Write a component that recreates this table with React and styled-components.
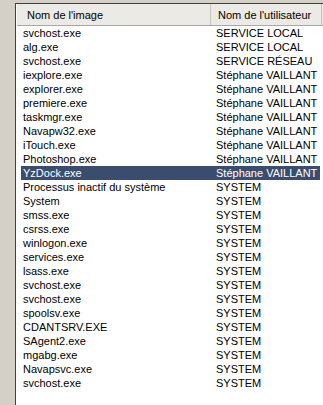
import React from 'react'
import styled, { createGlobalStyle } from 'styled-components'

const GlobalStyle = createGlobalStyle`
  html, body {
    margin: 0;
    padding: 0;
    background: #d4d0c8;
    overflow: hidden;
  }
`

const Window = styled.div`
  width: 323px;
  height: 405px;
  padding: 3px 0 0 15px;
  box-sizing: border-box;
  font-family: "Liberation Sans", Arial, sans-serif;
  font-size: 11px;
  color: #000;
`

const ListView = styled.div`
  height: 100%;
  background: #fff;
  border-top: 1px solid #404040;
  border-left: 1px solid #404040;
  box-sizing: border-box;
  padding-left: 1px;
`

const Header = styled.div`
  display: flex;
  height: 22px;
  background: #ebeae4;
  border-bottom: 1px solid #a7a6aa;
  box-sizing: border-box;
`

const HeaderCell = styled.div`
  width: ${(p) => p.width}px;
  padding-left: ${(p) => p.pad}px;
  box-sizing: border-box;
  display: flex;
  align-items: center;
  border-right: 1px solid #c6c5bd;
  white-space: nowrap;
`

// full-row selection starts at the label, a few pixels in from the border
const Row = styled.div`
  display: flex;
  height: 14px;
  line-height: 14px;
  margin-left: 4px;
  width: 299px;
  background: ${(p) => (p.selected ? '#3b4d6e' : 'transparent')};
  color: ${(p) => (p.selected ? '#fff' : '#000')};
`

const Cell = styled.div`
  width: ${(p) => p.width}px;
  padding-left: ${(p) => p.pad}px;
  box-sizing: border-box;
  white-space: nowrap;
`

const processes = [
  ['svchost.exe', 'SERVICE LOCAL'],
  ['alg.exe', 'SERVICE LOCAL'],
  ['svchost.exe', 'SERVICE RÉSEAU'],
  ['iexplore.exe', 'Stéphane VAILLANT'],
  ['explorer.exe', 'Stéphane VAILLANT'],
  ['premiere.exe', 'Stéphane VAILLANT'],
  ['taskmgr.exe', 'Stéphane VAILLANT'],
  ['Navapw32.exe', 'Stéphane VAILLANT'],
  ['iTouch.exe', 'Stéphane VAILLANT'],
  ['Photoshop.exe', 'Stéphane VAILLANT'],
  ['YzDock.exe', 'Stéphane VAILLANT'],
  ['Processus inactif du système', 'SYSTEM'],
  ['System', 'SYSTEM'],
  ['smss.exe', 'SYSTEM'],
  ['csrss.exe', 'SYSTEM'],
  ['winlogon.exe', 'SYSTEM'],
  ['services.exe', 'SYSTEM'],
  ['lsass.exe', 'SYSTEM'],
  ['svchost.exe', 'SYSTEM'],
  ['svchost.exe', 'SYSTEM'],
  ['spoolsv.exe', 'SYSTEM'],
  ['CDANTSRV.EXE', 'SYSTEM'],
  ['SAgent2.exe', 'SYSTEM'],
  ['mgabg.exe', 'SYSTEM'],
  ['Navapsvc.exe', 'SYSTEM'],
  ['svchost.exe', 'SYSTEM'],
]

export default function App() {
  return (
    <>
      <GlobalStyle />
      <Window>
        <ListView>
          <Header>
            <HeaderCell width={194} pad={10}>Nom de l'image</HeaderCell>
            <HeaderCell width={111} pad={7}>Nom de l'utilisateur</HeaderCell>
          </Header>
          {processes.map(([name, user], i) => (
            <Row key={i} selected={i === 10}>
              <Cell width={190} pad={2}>{name}</Cell>
              <Cell width={109} pad={5}>{user}</Cell>
            </Row>
          ))}
        </ListView>
      </Window>
    </>
  )
}
